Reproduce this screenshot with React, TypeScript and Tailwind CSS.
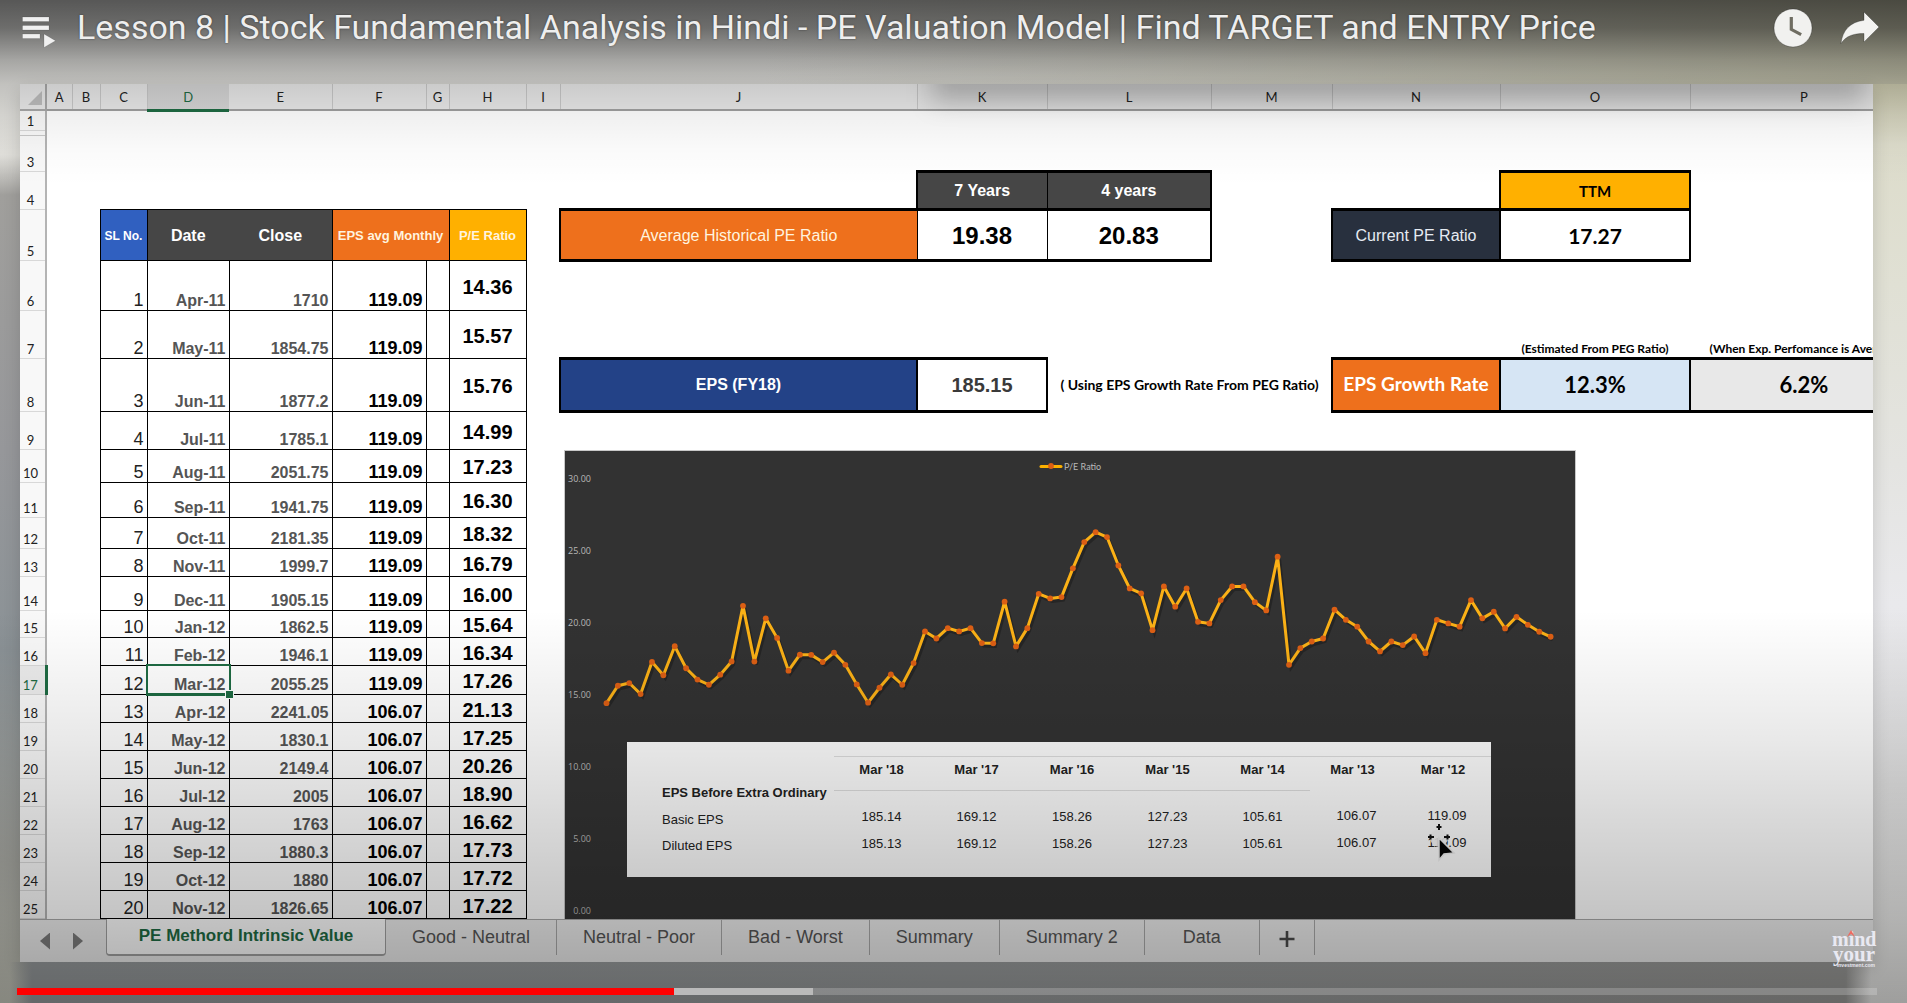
import React from "react";

type DataRow = { n: number; h: string; date: string; close: string; eps: string; pe: string };

const columns = [
  { id: "A", w: "w-[26px]" },
  { id: "B", w: "w-[28px]" },
  { id: "C", w: "w-[47px]" },
  { id: "D", w: "w-[82px]" },
  { id: "E", w: "w-[103px]" },
  { id: "F", w: "w-[94px]" },
  { id: "G", w: "w-[23px]" },
  { id: "H", w: "w-[77px]" },
  { id: "I", w: "w-[34px]" },
  { id: "J", w: "w-[357px]" },
  { id: "K", w: "w-[130px]" },
  { id: "L", w: "w-[164px]" },
  { id: "M", w: "w-[121px]" },
  { id: "N", w: "w-[168px]" },
  { id: "O", w: "w-[190px]" },
  { id: "P", w: "" },
];

const rows: DataRow[] = [
  { n: 1, h: "h-[50px]", date: "Apr-11", close: "1710", eps: "119.09", pe: "14.36" },
  { n: 2, h: "h-[48px]", date: "May-11", close: "1854.75", eps: "119.09", pe: "15.57" },
  { n: 3, h: "h-[53px]", date: "Jun-11", close: "1877.2", eps: "119.09", pe: "15.76" },
  { n: 4, h: "h-[38px]", date: "Jul-11", close: "1785.1", eps: "119.09", pe: "14.99" },
  { n: 5, h: "h-[33px]", date: "Aug-11", close: "2051.75", eps: "119.09", pe: "17.23" },
  { n: 6, h: "h-[35px]", date: "Sep-11", close: "1941.75", eps: "119.09", pe: "16.30" },
  { n: 7, h: "h-[31px]", date: "Oct-11", close: "2181.35", eps: "119.09", pe: "18.32" },
  { n: 8, h: "h-[28px]", date: "Nov-11", close: "1999.7", eps: "119.09", pe: "16.79" },
  { n: 9, h: "h-[34px]", date: "Dec-11", close: "1905.15", eps: "119.09", pe: "16.00" },
  { n: 10, h: "h-[27px]", date: "Jan-12", close: "1862.5", eps: "119.09", pe: "15.64" },
  { n: 11, h: "h-[28px]", date: "Feb-12", close: "1946.1", eps: "119.09", pe: "16.34" },
  { n: 12, h: "h-[29px]", date: "Mar-12", close: "2055.25", eps: "119.09", pe: "17.26" },
  { n: 13, h: "h-[28px]", date: "Apr-12", close: "2241.05", eps: "106.07", pe: "21.13" },
  { n: 14, h: "h-[28px]", date: "May-12", close: "1830.1", eps: "106.07", pe: "17.25" },
  { n: 15, h: "h-[28px]", date: "Jun-12", close: "2149.4", eps: "106.07", pe: "20.26" },
  { n: 16, h: "h-[28px]", date: "Jul-12", close: "2005", eps: "106.07", pe: "18.90" },
  { n: 17, h: "h-[28px]", date: "Aug-12", close: "1763", eps: "106.07", pe: "16.62" },
  { n: 18, h: "h-[28px]", date: "Sep-12", close: "1880.3", eps: "106.07", pe: "17.73" },
  { n: 19, h: "h-[28px]", date: "Oct-12", close: "1880", eps: "106.07", pe: "17.72" },
  { n: 20, h: "h-[28px]", date: "Nov-12", close: "1826.65", eps: "106.07", pe: "17.22" },
];

const peSeries = [
  14.36, 15.57, 15.76, 14.99, 17.23, 16.3, 18.32, 16.79, 16.0, 15.64, 16.34, 17.26, 21.13, 17.25, 20.26, 18.9, 16.62,
  17.73, 17.72, 17.22, 17.87, 17.03, 15.66, 14.39, 15.43, 16.36, 15.64, 17.15, 19.35, 18.86, 19.58, 19.35, 19.58, 18.54,
  18.52, 21.42, 18.31, 19.58, 21.97, 21.65, 21.74, 23.74, 25.57, 26.26, 25.92, 23.94, 22.34, 22.0, 19.44, 22.48, 21.07,
  22.34, 20.02, 19.91, 21.53, 22.48, 22.48, 21.39, 20.81, 24.55, 17.03, 18.19, 18.65, 18.86, 20.86, 20.16, 19.68, 18.65,
  17.96, 18.65, 18.4, 19.0, 17.84, 20.16, 19.91, 19.68, 21.53, 20.26, 20.72, 19.56, 20.37, 19.81, 19.33, 18.98,
];

const epsYears = [
  { year: "Mar '18", basic: "185.14", diluted: "185.13" },
  { year: "Mar '17", basic: "169.12", diluted: "169.12" },
  { year: "Mar '16", basic: "158.26", diluted: "158.26" },
  { year: "Mar '15", basic: "127.23", diluted: "127.23" },
  { year: "Mar '14", basic: "105.61", diluted: "105.61" },
  { year: "Mar '13", basic: "106.07", diluted: "106.07" },
  { year: "Mar '12", basic: "119.09", diluted: "119.09" },
];

const tabs = ["Good - Neutral", "Neutral - Poor", "Bad - Worst", "Summary", "Summary 2", "Data"];

const arial = "font-['Liberation_Sans',Arial,sans-serif]";
const lato = "font-['Lato',Calibri,sans-serif]";

function TitleBar() {
  return (
    <header className="relative z-20 flex h-[84px] items-start justify-between pr-[27px] pl-[22px]">
      <div className="flex min-w-0 items-start">
        <button aria-label="Playlist" className="mt-[16px] mr-[21px] shrink-0">
          <svg width="34" height="32" viewBox="0 0 34 32" fill="#f0f0f0" stroke="#00000033" strokeWidth="0.6">
            <rect x="0.5" y="1" width="26.5" height="4.5" />
            <rect x="0.5" y="9.5" width="26.5" height="4.5" />
            <rect x="0.5" y="18" width="17.5" height="4.5" />
            <path d="M22 18l11.5 6.7L22 31.5z" />
          </svg>
        </button>
        <h1 className="truncate font-['Roboto',sans-serif] text-[34px] leading-[54px] text-[#eeeeee] [text-shadow:0_0_2px_rgba(0,0,0,0.5)]">
          Lesson 8 | Stock Fundamental Analysis in Hindi - PE Valuation Model | Find TARGET and ENTRY Price
        </h1>
      </div>
      <div className="flex shrink-0 items-start gap-[27px] pt-[8px]">
        <button aria-label="Watch later">
          <svg width="40" height="40" viewBox="0 0 40 40">
            <circle cx="20" cy="20" r="19" fill="#f1f1ef" stroke="#00000040" />
            <path d="M16.7 9h3.2v11.5l9 4.7-1.5 2.7-10.7-5.7z" fill="#6f6d62" />
          </svg>
        </button>
        <button aria-label="Share">
          <svg width="40" height="40" viewBox="0 0 40 40">
            <path
              d="M24 4l15 15-15 15v-8.500C13 25.500 6 28 1 35.500 2.500 22.500 10 14 24 12.300z"
              fill="#f3f3f1"
              stroke="#00000040"
            />
          </svg>
        </button>
      </div>
    </header>
  );
}

function RowHead({ n, active }: { n?: number; active?: boolean }) {
  return (
    <th
      scope="row"
      className={
        active
          ? "border-r-[3px] border-b border-r-[#1e6b43] border-b-[#d8d8d8] bg-[#ececec] p-0 align-bottom text-[13px] leading-[18px] font-normal text-[#1e6b43]"
          : "border-r-2 border-b border-r-[#b4b4b4] border-b-[#d8d8d8] bg-[#f8f8f8] p-0 align-bottom text-[13px] leading-[18px] font-normal text-[#222]"
      }
    >
      <span className="block pr-[4px] text-center">{n}</span>
    </th>
  );
}

function DataCells({ row }: { row: DataRow }) {
  const selected = row.date === "Mar-12";
  return (
    <>
      <td className={`border border-black p-0 pr-[3px] text-right align-bottom text-[18px] leading-[20px] text-[#222] ${arial}`}>
        {row.n}
      </td>
      <td
        className={`relative border border-black p-0 pr-[3px] text-right align-bottom text-[16px] leading-[18px] font-bold text-[#555] ${arial}`}
      >
        {row.date}
        {selected && (
          <span className="absolute -inset-[2px] border-2 border-b-[3px] border-[#1e6b43]">
            <span className="absolute -right-[5px] -bottom-[6px] size-[9px] border border-white bg-[#1e6b43]" />
          </span>
        )}
      </td>
      <td
        className={`border border-black p-0 pr-[3px] text-right align-bottom text-[16px] leading-[18px] font-bold text-[#555] ${arial}`}
      >
        {row.close}
      </td>
      <td
        className={`border border-black p-0 pr-[3px] text-right align-bottom text-[18px] leading-[20px] font-bold text-black ${arial}`}
      >
        {row.eps}
      </td>
      <td className="border border-black p-0" />
      <td className={`border border-black p-0 pt-[3px] text-center text-[20px] leading-[22px] font-bold text-black ${arial}`}>
        {row.pe}
      </td>
    </>
  );
}

function SummaryCells({ n }: { n: number }) {
  if (n === 2) {
    return (
      <>
        <td colSpan={6} />
        <td className="p-0 text-center align-bottom text-[12px] leading-[16px] font-bold whitespace-nowrap">
          (Estimated From PEG Ratio)
        </td>
        <td className="p-0 text-center align-bottom text-[12px] leading-[16px] font-bold whitespace-nowrap">
          (When Exp. Perfomance is Average)
        </td>
      </>
    );
  }
  if (n === 3) {
    return (
      <>
        <td />
        <td
          className={`border-x-2 border-y-[3px] border-black bg-[#234287] p-0 text-center text-[16px] font-bold text-white ${arial}`}
        >
          EPS (FY18)
        </td>
        <td
          className={`border-x-2 border-y-[3px] border-black p-0 text-center text-[20px] font-bold text-[#3a3a3a] ${arial}`}
        >
          185.15
        </td>
        <td colSpan={2} className="p-0 text-center text-[14px] font-bold whitespace-nowrap">
          ( Using EPS Growth Rate From PEG Ratio)
        </td>
        <td className="border-x-2 border-y-[3px] border-black bg-[#ee701c] p-0 text-center text-[19px] font-bold whitespace-nowrap text-white">
          EPS Growth Rate
        </td>
        <td className="border-x-2 border-y-[3px] border-black bg-[#d6e5f4] p-0 text-center text-[22px] font-bold">12.3%</td>
        <td className="border-x-2 border-y-[3px] border-black bg-[#e8e8e8] p-0 text-center text-[22px] font-bold">6.2%</td>
      </>
    );
  }
  return <td colSpan={8} />;
}

function SheetTable() {
  return (
    <table className={`w-[calc(100%+46px)] min-w-[1700px] table-fixed border-collapse text-black ${lato}`}>
      <colgroup>
        <col className="w-[26px]" />
        {columns.map((c) => (
          <col key={c.id} className={c.w} />
        ))}
      </colgroup>
      <thead>
        <tr className="h-[26px]">
          <th aria-label="Select all" className="border-r-2 border-b-2 border-[#a8a8a8] bg-[#e9e9e9] p-0 align-bottom">
            <span className="mr-[3px] mb-[4px] ml-auto block size-[14px] bg-[#bdbdbd] [clip-path:polygon(100%_0,100%_100%,0_100%)]" />
          </th>
          {columns.map((c) => (
            <th
              key={c.id}
              scope="col"
              className={
                c.id === "D"
                  ? "border-b-[3px] border-b-[#1e6b43] bg-[#d6d6d6] p-0 pt-[2px] text-[13px] font-normal text-[#1e6b43]"
                  : "border-r border-b-2 border-r-[#c9c9c9] border-b-[#a0a0a0] bg-[#e9e9e9] p-0 pt-[2px] text-[13px] font-normal text-[#222]"
              }
            >
              {c.id}
            </th>
          ))}
        </tr>
      </thead>
      <tbody>
        <tr className="h-[20px]">
          <RowHead n={1} />
          <td colSpan={16} />
        </tr>
        <tr className="h-[5px]">
          <th className="border-r-2 border-b border-r-[#b4b4b4] border-b-[#c8c8c8] bg-[#f8f8f8] p-0" />
          <td colSpan={16} className="p-0" />
        </tr>
        <tr className="h-[36px]">
          <RowHead n={3} />
          <td colSpan={16} />
        </tr>
        <tr className="h-[38px]">
          <RowHead n={4} />
          <td colSpan={10} />
          <td
            className={`border-t-[3px] border-r border-b-[3px] border-l-2 border-black bg-[#464646] p-0 pt-[2px] text-center text-[16px] font-bold text-white ${arial}`}
          >
            7 Years
          </td>
          <td
            className={`border-t-[3px] border-r-2 border-b-[3px] border-black bg-[#464646] p-0 pt-[2px] text-center text-[16px] font-bold text-white ${arial}`}
          >
            4 years
          </td>
          <td colSpan={2} />
          <td className="border-x-2 border-y-[3px] border-black bg-[#ffb000] p-0 pt-[2px] text-center text-[15px] font-bold">
            TTM
          </td>
          <td />
        </tr>
        <tr className="h-[51px]">
          <RowHead n={5} />
          <td colSpan={2} />
          <td className={`border border-black bg-[#3060c0] p-0 pt-[2px] text-center text-[12px] font-bold text-white ${arial}`}>
            SL No.
          </td>
          <td className={`border-y border-black bg-[#464646] p-0 pt-[2px] text-center text-[16px] font-bold text-white ${arial}`}>
            Date
          </td>
          <td className={`border-y border-black bg-[#464646] p-0 pt-[2px] text-center text-[16px] font-bold text-white ${arial}`}>
            Close
          </td>
          <td
            colSpan={2}
            className={`border border-black bg-[#ee701c] p-0 pt-[2px] text-center text-[13px] font-bold text-[#fff3df] ${arial}`}
          >
            EPS avg Monthly
          </td>
          <td
            className={`border border-black bg-[#ffb000] p-0 pt-[2px] text-center text-[13px] font-bold text-[#fff3df] ${arial}`}
          >
            P/E Ratio
          </td>
          <td />
          <td
            className={`border-y-[3px] border-r border-l-2 border-black bg-[#ee701c] p-0 pt-[2px] text-center text-[16px] text-[#fff3df] ${arial}`}
          >
            Average Historical PE Ratio
          </td>
          <td className={`border-y-[3px] border-r border-black p-0 pt-[2px] text-center text-[24px] font-bold ${arial}`}>
            19.38
          </td>
          <td className={`border-y-[3px] border-r-2 border-black p-0 pt-[2px] text-center text-[24px] font-bold ${arial}`}>
            20.83
          </td>
          <td />
          <td
            className={`border-x-2 border-y-[3px] border-black bg-[#28303e] p-0 pt-[2px] text-center text-[16px] text-[#e6ebf2] ${arial}`}
          >
            Current PE Ratio
          </td>
          <td className="border-x-2 border-y-[3px] border-black p-0 pt-[2px] text-center text-[21px] font-bold">17.27</td>
          <td />
        </tr>
        {rows.map((row) => (
          <tr key={row.n} className={row.h}>
            <RowHead n={row.n + 5} active={row.n === 12} />
            <td colSpan={2} />
            <DataCells row={row} />
            <SummaryCells n={row.n} />
          </tr>
        ))}
      </tbody>
    </table>
  );
}

function EpsPanel() {
  return (
    <div className="absolute top-[291px] left-[62px] w-[864px] bg-[#fdfdfd] pt-[14px] pb-[17px]">
      <table className={`w-full table-fixed border-collapse text-[13px] text-[#222] ${arial}`}>
        <colgroup>
          <col className="w-[207px]" />
          <col className="w-[95px]" />
          <col className="w-[95px]" />
          <col className="w-[96px]" />
          <col className="w-[95px]" />
          <col className="w-[95px]" />
          <col className="w-[81px]" />
          <col />
        </colgroup>
        <tbody>
          <tr className="h-[34px]">
            <th rowSpan={2} scope="rowgroup" className="p-0 pb-[2px] pl-[35px] text-left align-bottom leading-[20px] whitespace-nowrap">
              EPS Before Extra Ordinary
            </th>
            {epsYears.map((y, i) => (
              <th
                key={y.year}
                scope="col"
                className={
                  i < 5
                    ? "border-y border-[#dedede] p-0 pt-[4px] align-top leading-[18px]"
                    : "border-t border-[#dedede] p-0 pt-[4px] pl-[4px] align-top leading-[18px]"
                }
              >
                {y.year}
              </th>
            ))}
          </tr>
          <tr className="h-[14px]">
            <td colSpan={7} className="p-0" />
          </tr>
          <tr className="h-[28px]">
            <th scope="row" className="p-0 pt-[3px] pl-[35px] text-left font-normal">
              Basic EPS
            </th>
            {epsYears.map((y, i) => (
              <td key={y.year} className={i < 5 ? "p-0 pb-[3px] text-center" : "p-0 pb-[5px] pl-[12px] text-center"}>
                {y.basic}
              </td>
            ))}
          </tr>
          <tr className="h-[27px]">
            <th scope="row" className="p-0 pl-[35px] text-left font-normal">
              Diluted EPS
            </th>
            {epsYears.map((y, i) => (
              <td key={y.year} className={i < 5 ? "p-0 pb-[5px] text-center" : "p-0 pb-[7px] pl-[12px] text-center"}>
                {y.diluted}
              </td>
            ))}
          </tr>
        </tbody>
      </table>
      <svg className="absolute top-[80px] left-[798px]" width="32" height="40" viewBox="0 0 32 40">
        <circle cx="14" cy="16" r="9" fill="#f6f6f6" opacity="0.9" />
        <path d="M14 2v6M11.500 5h5M3 15h6M5.500 12.500v5M19 15h6M22.500 12.500v5" stroke="#111" strokeWidth="2" />
        <path d="M14 16v22l5-6 10-1z" fill="#050505" stroke="#eee" strokeWidth="1.500" />
      </svg>
    </div>
  );
}

function PeChart() {
  const points = peSeries.map((v, i) => ({ x: 41.5 + i * 11.375, y: 458.5 - v * 14.37 }));
  const line = points.map((p) => `${p.x},${p.y}`).join(" ");
  return (
    <div className="absolute top-[366px] left-[544px] h-[480px] w-[1012px] border border-[#c8c8c8] bg-[#323232]">
      <svg width="1010" height="478" viewBox="0 0 1010 478" role="img" aria-label="P/E Ratio chart">
        {[0, 5, 10, 15, 20, 25, 30].map((v) => (
          <text
            key={v}
            x="26"
            y={462.5 - v * 14.37}
            textAnchor="end"
            fill="#b8b8b8"
            className="font-['Open_Sans',sans-serif] text-[9px]"
          >
            {v.toFixed(2)}
          </text>
        ))}
        <polyline points={line} transform="translate(2 3)" fill="none" stroke="#1c1c1c" strokeWidth="3" opacity="0.6" />
        <polyline points={line} fill="none" stroke="#fbb116" strokeWidth="3" strokeLinejoin="round" />
        {points.map((p) => (
          <circle key={p.x} cx={p.x} cy={p.y} r="2.9" fill="#dc5f14" />
        ))}
        <path d="M476 15.500h20" stroke="#fbb000" strokeWidth="3" strokeLinecap="round" />
        <circle cx="486" cy="15" r="2.9" fill="#dc5f14" />
        <text x="499" y="19" fill="#b8b8b8" className="font-['Lato',sans-serif] text-[9px]">
          P/E Ratio
        </text>
      </svg>
      <EpsPanel />
    </div>
  );
}

function SheetTabs() {
  return (
    <nav
      aria-label="Sheets"
      className={`flex h-[43px] items-start border-t border-[#a8a8a8] bg-[#ececec] text-[18px] text-[#555] ${arial}`}
    >
      <div className="flex w-[86px] gap-[23px] pt-[13px] pl-[20px]">
        <button aria-label="Previous sheet" className="h-[17px] w-[10px] bg-[#7c7c7c] [clip-path:polygon(100%_0,100%_100%,0_50%)]" />
        <button aria-label="Next sheet" className="h-[17px] w-[10px] bg-[#7c7c7c] [clip-path:polygon(0_0,100%_50%,0_100%)]" />
      </div>
      <button
        aria-current="page"
        className="-mt-px h-[37px] w-[280px] rounded-b-sm border-x border-b-2 border-[#a0a0a0] bg-[#fdfdfd] text-[17px] font-bold text-[#1e6b43]"
      >
        PE Methord Intrinsic Value
      </button>
      {tabs.map((t) => (
        <button key={t} className="h-[35px] min-w-[115px] border-r border-[#a8a8a8] px-[26px] whitespace-nowrap">
          {t}
        </button>
      ))}
      <button aria-label="Add sheet" className="flex h-[35px] w-[55px] items-center justify-center border-r border-[#a8a8a8]">
        <svg width="16" height="18" viewBox="0 0 16 18" className="mt-1" stroke="#4a4a4a" strokeWidth="2.6">
          <path d="M8 1v16M0.500 9h15" />
        </svg>
      </button>
    </nav>
  );
}

function ChannelLogo() {
  return (
    <a
      href="#channel"
      className="absolute right-[31px] bottom-[35px] z-20 block w-[44px] text-center font-['Liberation_Serif',serif] font-bold text-[#e9e9f2]"
    >
      <svg className="absolute -top-[1px] left-[14px]" width="10" height="9" viewBox="0 0 10 9">
        <path d="M1 8l4-7 4 7-4-3z" fill="#ee6a60" />
      </svg>
      <span className="block text-[20px] leading-[18px]">mind</span>
      <span className="block text-[21px] leading-[12px]">your</span>
      <span className={`block pt-[2px] pr-px text-right text-[5px] leading-[6px] ${arial}`}>investment.com</span>
    </a>
  );
}

export default function App() {
  return (
    <div className="relative flex min-h-screen flex-col overflow-hidden bg-[linear-gradient(to_right,transparent_0,transparent_40%,#b9b8a2_100%),linear-gradient(#dadad8_0,#e2e1dc_155px,#a09f9c_195px,#96979a_450px,#8b9296_650px,#a9aaa4_860px,#c9cabe_1003px)] bg-[length:100%_84px,100%_100%] bg-no-repeat">
      <div className="absolute top-[84px] right-0 bottom-0 w-[60px] bg-[linear-gradient(#c8c6ab_0,#dddccb_60px,#e0e0d4_200px,#e4e4e1_380px,#e9e9ec_520px,#e3e3e3_700px,#ececea_100%)]" />
      <div className="pointer-events-none absolute inset-x-0 top-0 z-10 h-[185px] bg-[linear-gradient(rgba(0,0,0,0.6)_0,rgba(0,0,0,0.5)_28px,rgba(0,0,0,0.25)_60px,rgba(0,0,0,0.13)_84px,rgba(0,0,0,0.06)_115px,rgba(0,0,0,0.02)_150px,transparent_185px)]" />
      <div className="pointer-events-none absolute inset-x-0 bottom-0 z-10 h-[393px] bg-[linear-gradient(transparent_0,rgba(0,0,0,0.09)_34%,rgba(0,0,0,0.23)_78%,rgba(0,0,0,0.33)_100%)]" />
      <TitleBar />
      <main className="relative mr-[34px] ml-[20px] shadow-[0_6px_16px_rgba(0,0,0,0.15)]">
        <div className="relative overflow-hidden bg-white">
          <SheetTable />
          <PeChart />
          <div className="pointer-events-none absolute -top-[20px] right-[8px] left-[912px] h-[38px] bg-black/20 blur-md" />
        </div>
        <SheetTabs />
      </main>
      <footer className="relative flex-1 bg-[linear-gradient(to_right,transparent_10px,#969a9c_32px,#999c9d_50%,#9a9a98_calc(100%-62px),transparent_calc(100%-36px))]">
        <div
          role="progressbar"
          aria-label="Playback"
          aria-valuenow={35}
          className="relative z-20 mt-[26px] mr-[30px] ml-[17px] flex h-[7px] bg-white/20"
        >
          <div className="w-[35.3%] bg-[#ff0000]" />
          <div className="w-[7.5%] bg-[#bababa]" />
        </div>
      </footer>
      <ChannelLogo />
    </div>
  );
}
